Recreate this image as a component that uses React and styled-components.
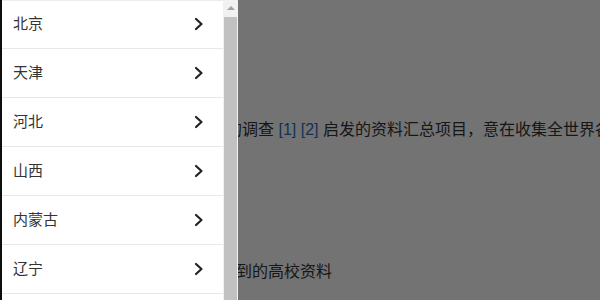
import styled, { createGlobalStyle } from 'styled-components'

const GlobalStyle = createGlobalStyle`
    html, body {
        margin: 0;
        padding: 0;
        background: #fff;
        overflow: hidden;
    }
    body {
        font-family: "Liberation Sans", "Noto Sans CJK SC", sans-serif;
        color: #333;
    }
`

//#     --- Page behind the drawer
const Page = styled.div`
    width: 600px;
    height: 300px;
    overflow: hidden;
    font-size: 16px;
    line-height: 24px;
`
const Para = styled.p`
    margin: 0;
    padding-left: ${ ({ indent }) => indent }px;
    padding-top: ${ ({ top }) => top }px;
    white-space: nowrap;
`
const Ref = styled.a`
    color: #2a6fc0;
    text-decoration: none;
`

//#     --- Mask and drawer
const Mask = styled.div`
    position: fixed;
    inset: 0;
    background-color: rgba(0, 0, 0, 0.55);
`
const Drawer = styled.aside`
    position: fixed;
    top: 0;
    left: 0;
    bottom: 0;
    display: flex;
    border-left: 2px solid #0d0d0d;
    background-color: #fff;
    box-shadow: inset 0 1px 0 #ececec;
`
const List = styled.ul`
    list-style: none;
    margin: 0;
    padding: 0;
    width: 221px;
    font-family: "Noto Sans CJK SC", "Liberation Sans", sans-serif;
`
const Row = styled.li`
    display: flex;
    align-items: center;
    justify-content: space-between;
    height: 48px;
    padding: 0 19px 0 11px;
    border-bottom: 1px solid #e8e8e8;
    font-size: 15px;
    color: #333;
`
const Label = styled.span`
    margin-bottom: 3px;
`
const Track = styled.div`
    display: flex;
    flex-direction: column;
    align-items: center;
    width: 15px;
    background-color: #f1f1f1;
`
const UpArrow = styled.div`
    margin-top: 6px;
    width: 0;
    height: 0;
    border-left: 4px solid transparent;
    border-right: 4px solid transparent;
    border-bottom: 4px solid #a3a3a3;
`
const Thumb = styled.div`
    margin-top: 7px;
    width: 13px;
    flex: 1;
    background-color: #c1c1c1;
`

const Chevron = () => (
    <svg width="10" height="14" viewBox="0 0 10 14">
        <polyline points="2,2 7.5,7 2,12" fill="none" stroke="#222" strokeWidth="2.2" strokeLinecap="round" strokeLinejoin="round" />
    </svg>
)

const provinces = [ '北京', '天津', '河北', '山西', '内蒙古', '辽宁', '吉林' ]

const App = () => {
    return(
        <>
            <GlobalStyle />
            <Page>
                <Para indent={ 18 } top={ 118 }>
                    本项目是受到一份关于大学生的调查 <Ref>[1]</Ref> <Ref>[2]</Ref> 启发的资料汇总项目，意在收集全世界各地大学的资料
                </Para>
                <Para indent={ 12 } top={ 118 }>
                    欢迎大家提交自己所在或所了解到的高校资料
                </Para>
            </Page>
            <Mask />
            <Drawer>
                <List>
                    { provinces.map( name => (
                        <Row key={ name }>
                            <Label>{ name }</Label>
                            <Chevron />
                        </Row>
                    ) ) }
                </List>
                <Track>
                    <UpArrow />
                    <Thumb />
                </Track>
            </Drawer>
        </>
    )
}
export default App
